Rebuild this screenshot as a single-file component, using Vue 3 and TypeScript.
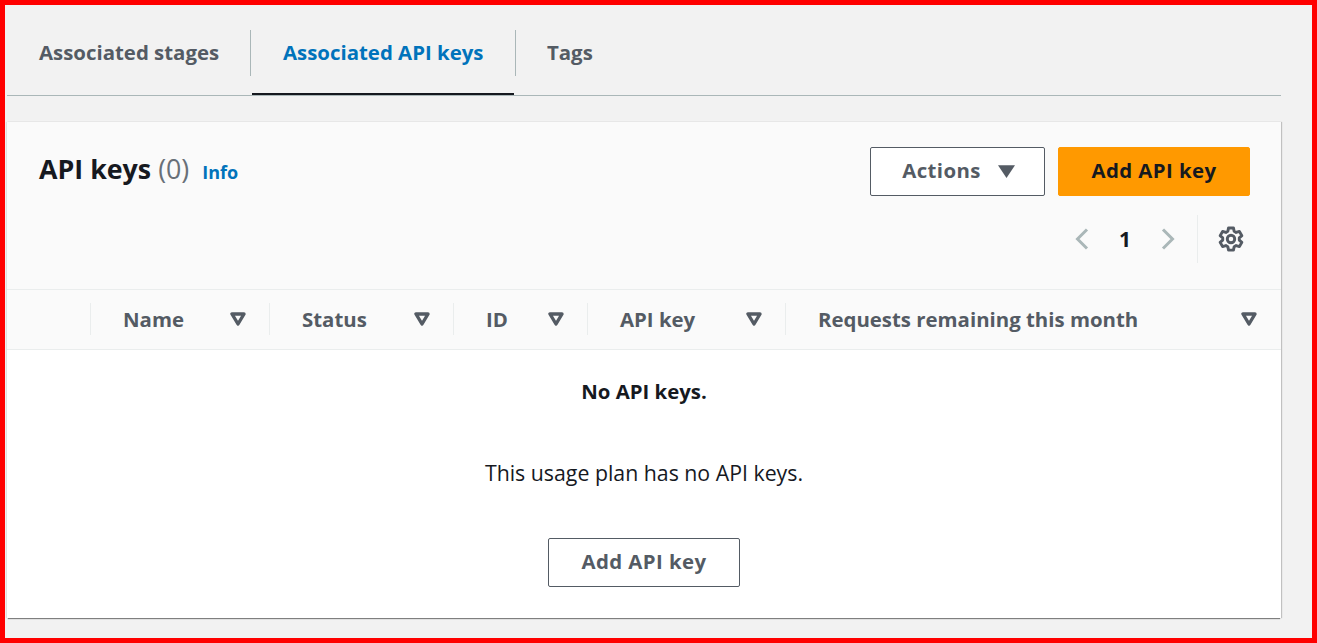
<script setup lang="ts">
const columns = [
  { label: '', width: 84 },
  { label: 'Name', width: 179 },
  { label: 'Status', width: 184 },
  { label: 'ID', width: 134 },
  { label: 'API key', width: 198 },
  { label: 'Requests remaining this month', width: 495 },
]
const gridColumns = columns.map((c) => `${c.width}px`).join(' ')
</script>

<template>
  <div class="frame">
    <nav class="tabs">
      <div class="tab first"><span>Associated stages</span></div>
      <div class="tab active"><span>Associated API keys</span></div>
      <div class="tab last"><span>Tags</span></div>
    </nav>

    <section class="card">
      <header class="card-head">
        <div class="title-row">
          <h2 class="title">API keys <span class="count">(0)</span></h2>
          <a class="info">Info</a>
          <div class="actions">
            <button class="btn actions-btn">
              Actions
              <svg class="caret" viewBox="0 0 16 16" width="17" height="17"><path d="M0 2h16L8 14z" fill="#545b64" /></svg>
            </button>
            <button class="btn primary">Add API key</button>
          </div>
        </div>
        <div class="pager-row">
          <svg class="chev" viewBox="0 0 16 24" width="16" height="24"><path d="M13 2.500 3.500 12l9.500 9.500" /></svg>
          <span class="page">1</span>
          <svg class="chev" viewBox="0 0 16 24" width="16" height="24"><path d="M3 2.500 12.500 12 3 21.500" /></svg>
          <div class="gear-wrap">
            <svg class="gear" viewBox="0 0 24 24" width="28" height="28">
              <path d="M9.900 2.500h4.200l.6 2.900 1.700 1 2.800-.9 2.100 3.600-2.200 2v1.800l2.200 2-2.100 3.600-2.800-.9-1.700 1-.6 2.900H9.900l-.6-2.900-1.700-1-2.800.9-2.100-3.600 2.200-2v-1.800l-2.200-2 2.100-3.600 2.800.9 1.700-1z" />
              <circle cx="12" cy="12" r="3.200" />
            </svg>
          </div>
        </div>
      </header>

      <div class="thead" :style="{ gridTemplateColumns: gridColumns }">
        <div v-for="c in columns" :key="c.label" class="th">
          <template v-if="c.label">
            <span>{{ c.label }}</span>
            <svg class="sort" viewBox="0 0 16 14" width="16" height="14"><path d="M2 2h12L8 12z" /></svg>
          </template>
        </div>
      </div>

      <div class="empty">
        <strong class="empty-title">No API keys.</strong>
        <p class="empty-text">This usage plan has no API keys.</p>
        <button class="btn empty-btn">Add API key</button>
      </div>
    </section>
  </div>
</template>

<style>
html, body { margin: 0; padding: 0; }
</style>

<style scoped>
.frame {
  box-sizing: border-box;
  width: 1317px;
  height: 643px;
  border: 5px solid #ff0000;
  background: #f2f2f2;
  padding: 0 31px 0 2px;
  font-family: "Open Sans", "Noto Sans", sans-serif;
  overflow: hidden;
}
.tabs {
  display: flex;
  height: 90px;
  border-bottom: 1px solid #aab7b8;
  box-sizing: content-box;
}
.tab {
  position: relative;
  box-sizing: border-box;
  display: flex;
  align-items: center;
  height: 90px;
  padding-top: 4px;
  font-size: 20.400px;
  font-weight: 700;
  color: #545b64;
}
.tab.first { width: 245px; padding-left: 32px; }
.tab.active { width: 262px; padding-left: 31px; padding-top: 6px; color: #0073bb; border-bottom: 2px solid #16191f; }
.tab.last { padding-left: 33px; }
.tab.active::before, .tab.active::after {
  content: "";
  position: absolute;
  top: 25px;
  width: 1px;
  height: 46px;
  background: #aab7b8;
}
.tab.active::before { left: -2px; }
.tab.active::after { right: -2px; }
.card {
  margin-top: 26px;
  height: 496px;
  background: #fff;
  box-shadow: 0 2px 1px -1px rgba(0, 0, 0, 0.45), 1px 0 1px 0 rgba(0, 0, 0, 0.2), -1px 0 1px 0 rgba(0, 0, 0, 0.07);
  display: flex;
  flex-direction: column;
}
.card-head {
  box-sizing: border-box;
  height: 168px;
  background: #fafafa;
  border-bottom: 1px solid #eaeded;
  padding: 25px 31px 0 32px;
}
.title-row { display: flex; align-items: center; height: 49px; }
.title {
  margin: -5px 0 0;
  font-size: 26.800px;
  font-weight: 700;
  color: #16191f;
  line-height: 46px;
}
.count { font-weight: 400; color: #687078; }
.info {
  margin-left: 13px;
  margin-top: 1px;
  font-size: 18px;
  font-weight: 700;
  color: #0073bb;
}
.actions { margin-left: auto; display: flex; gap: 13px; }
.btn {
  box-sizing: border-box;
  height: 49px;
  padding: 0 0 4px;
  font-family: inherit;
  font-size: 20.400px;
  font-weight: 700;
  border-radius: 2px;
  display: inline-flex;
  align-items: center;
  justify-content: center;
  letter-spacing: 0.4px;
}
.actions-btn {
  width: 175px;
  background: #fff;
  border: 1px solid #545b64;
  color: #545b64;
  gap: 17px;
  padding-left: 2px;
}
.caret { margin-top: 4px; }
.primary {
  width: 192px;
  background: #ff9900;
  border: 1px solid #ff9900;
  color: #16191f;
}
.pager-row {
  display: flex;
  align-items: center;
  justify-content: flex-end;
  height: 48px;
  margin-top: 19px;
  padding-right: 5px;
}
.chev { fill: none; stroke: #aab7b8; stroke-width: 3; }
.page {
  width: 72px;
  text-align: center;
  font-size: 21px;
  font-weight: 700;
  color: #16191f;
  margin: 0 -1px;
}
.gear-wrap {
  display: flex;
  align-items: center;
  height: 48px;
  margin-left: 21px;
  padding-left: 19px;
  border-left: 1px solid #eaeded;
}
.gear { fill: none; stroke: #545b64; stroke-width: 2.500; stroke-linejoin: round; }
.thead {
  display: grid;
  box-sizing: border-box;
  height: 60px;
  background: #fafafa;
  border-bottom: 1px solid #eaeded;
  align-items: center;
}
.th {
  box-sizing: border-box;
  height: 32px;
  display: flex;
  align-items: center;
  justify-content: space-between;
  padding: 0 23px 0 32px;
  border-right: 1px solid #eaeded;
  font-size: 20.400px;
  font-weight: 700;
  color: #545b64;
  margin-top: -1px;
}
.th:last-child { border-right: 0; padding-right: 24px; }
.sort { fill: none; stroke: #545b64; stroke-width: 3.400; stroke-linejoin: round; }
.empty {
  flex: 1;
  background: #fff;
  display: flex;
  flex-direction: column;
  align-items: center;
  padding-top: 28px;
}
.empty-title {
  font-size: 20.400px;
  font-weight: 700;
  line-height: 27px;
  color: #16191f;
}
.empty-text {
  margin: 54px 0 0;
  font-size: 21.300px;
  line-height: 27px;
  color: #16191f;
}
.empty-btn {
  margin-top: 52px;
  width: 192px;
  background: #fff;
  border: 1px solid #545b64;
  color: #545b64;
}
</style>
